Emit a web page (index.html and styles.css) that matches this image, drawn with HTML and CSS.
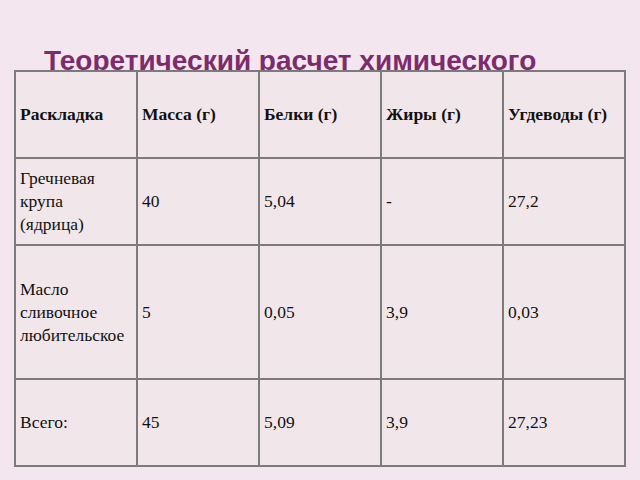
FILE: index.html
```html
<!DOCTYPE html>
<html lang="ru">
<head>
<meta charset="utf-8">
<link rel="stylesheet" href="styles.css">
</head>
<body>
<div class="slide">
  <h1 class="title">Теоретический расчет химического</h1>
  <table class="grid">
    <tr class="head">
      <th>Раскладка</th><th>Масса (г)</th><th>Белки (г)</th><th>Жиры (г)</th><th>Угдеводы (г)</th>
    </tr>
    <tr class="r2">
      <td>Гречневая<br>крупа<br>(ядрица)</td><td>40</td><td>5,04</td><td>-</td><td>27,2</td>
    </tr>
    <tr class="r3">
      <td>Масло<br>сливочное<br>любительское</td><td>5</td><td>0,05</td><td>3,9</td><td>0,03</td>
    </tr>
    <tr class="r4">
      <td>Всего:</td><td>45</td><td>5,09</td><td>3,9</td><td>27,23</td>
    </tr>
  </table>
</div>
</body>
</html>
```

FILE: styles.css
```css
html, body {
  margin: 0;
  padding: 0;
  background: #f4e6ef;
}
.slide {
  width: 640px;
  height: 480px;
  padding: 46px 0 0 14px;
  box-sizing: border-box;
}
.title {
  margin: 0 0 0 30px;
  font-family: "Liberation Sans", Arial, sans-serif;
  font-weight: bold;
  font-size: 28px;
  line-height: 30px;
  color: #7d2b6d;
  height: 24px;
  white-space: nowrap;
}
.grid {
  position: relative;
  border-collapse: collapse;
  table-layout: fixed;
  width: 612px;
  background: #f1e7ea;
  font-family: "Liberation Serif", "Times New Roman", serif;
  font-size: 17.5px;
  color: #111;
}
.grid th, .grid td {
  border: 2px solid #7c7a7b;
  padding: 0 0 0 4px;
  text-align: left;
  vertical-align: middle;
  line-height: 23px;
}
.grid th {
  font-weight: bold;
  font-size: 17.5px;
}
.head { height: 87px; }
.r2 { height: 87px; }
.r3 { height: 134px; }
.r4 { height: 87px; }
```
